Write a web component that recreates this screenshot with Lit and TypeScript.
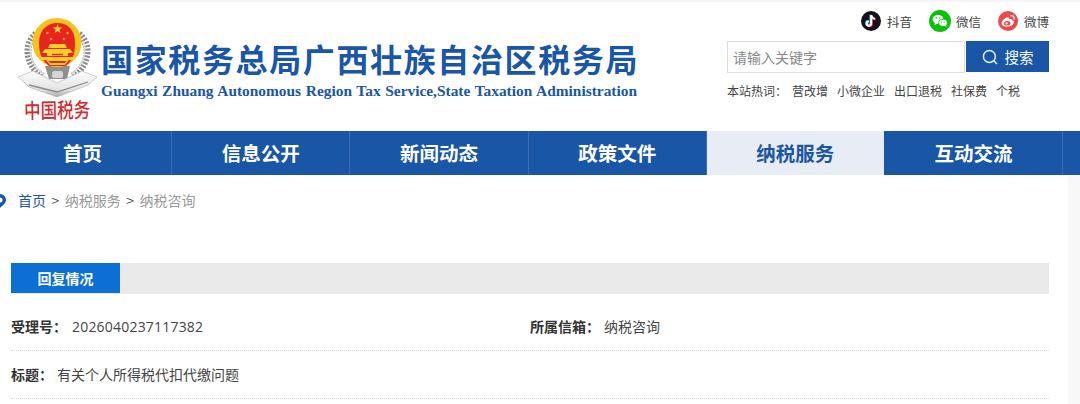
import { LitElement, html, css, svg } from "lit";
import { customElement } from "lit/decorators.js";

const star = (x: number, y: number, r: number) => {
  const pts: string[] = [];
  for (let i = 0; i < 10; i++) {
    const a = -Math.PI / 2 + (i * Math.PI) / 5;
    const q = i % 2 ? r * 0.4 : r;
    pts.push(`${(x + q * Math.cos(a)).toFixed(2)},${(y + q * Math.sin(a)).toFixed(2)}`);
  }
  return svg`<polygon points=${pts.join(" ")} fill="#ffd83a"/>`;
};

const logo = html`<svg class="logo" viewBox="0 0 101 129" width="101" height="129" aria-hidden="true">
  <defs>
    <linearGradient id="rb" x1="0" y1="0" x2="0" y2="1">
      <stop offset="0" stop-color="#fdfdfd"/><stop offset=".7" stop-color="#e4e4e4"/><stop offset="1" stop-color="#a9a9a9"/>
    </linearGradient>
  </defs>
  <g fill="none">
    <path d="M36 34 C24 44 25 64 42 76" stroke="#8d8d8d" stroke-width="7" stroke-dasharray="2 1.4"/>
    <path d="M79 34 C91 44 90 64 73 76" stroke="#8d8d8d" stroke-width="7" stroke-dasharray="2 1.4"/>
    <path d="M32 41 C28 51 31 65 43 74" stroke="#dedede" stroke-width="1.6"/>
    <path d="M83 41 C87 51 84 65 72 74" stroke="#dedede" stroke-width="1.6"/>
  </g>
  <path d="M45 66 H70 L67 79 H49 Z" fill="#8f8f8f"/>
  <path d="M18 77 L33 71 L57 83 L82 71 L97 77 L88 85 L57 97 L29 87 L24 82 Z" fill="url(#rb)" stroke="#b4b4b4" stroke-width=".7"/>
  <path d="M29 85 L57 92 L88 82" fill="none" stroke="#8a8a8a" stroke-width="1.3"/>
  <rect x="52" y="71" width="11" height="7" rx="2" fill="#d5d5d5"/>
  <circle cx="57" cy="42.500" r="24.500" fill="#f6c21c"/>
  <path d="M39 43 C39 30 47 23 57.500 23 C68 23 75 30 75 43 C75 55 72 61 66 66 H49 C43 61 39 55 39 43 Z" fill="#e8241f"/>
  ${star(57.5, 29, 5)}${star(47.5, 33, 1.8)}${star(67.5, 33, 1.8)}${star(51, 39, 1.7)}${star(64, 39, 1.7)}
  <path d="M50 44 H65 L67 48 H48 Z" fill="#f8cf2a"/>
  <path d="M45 49 H70 L73 53 H42 Z" fill="#f8cf2a"/>
  <rect x="47" y="53" width="21" height="3" fill="#f8cf2a"/>
  <rect x="52" y="53.800" width="11" height="1.500" fill="#e8241f"/>
  <path d="M40 57 H75 L73 60 H69 L65 65 H50 L46 60 H42 Z" fill="#f8cf2a"/>
  <path d="M48 61 H67 L64.500 63 H50.500 Z" fill="#e8241f"/>
  <text x="24" y="118" class="seal" textLength="66" lengthAdjust="spacingAndGlyphs" transform="rotate(-1 57 110)">中国税务</text>
</svg>`;

const douyin = html`<svg width="20" height="20" viewBox="0 0 20 20" aria-hidden="true">
  <circle cx="10" cy="10" r="10" fill="#15101a"/>
  <path d="M10.2 4.2 V12.6 A2.2 2.2 0 1 1 8 10.4 M10.2 4.2 C10.5 6.4 12 7.7 14 7.9" transform="translate(-.7 -.4)" fill="none" stroke="#25f4ee" stroke-width="1.9"/>
  <path d="M10.2 4.2 V12.6 A2.2 2.2 0 1 1 8 10.4 M10.2 4.2 C10.5 6.4 12 7.7 14 7.9" transform="translate(.7 .4)" fill="none" stroke="#fe2c55" stroke-width="1.9"/>
  <path d="M10.2 4.2 V12.6 A2.2 2.2 0 1 1 8 10.4 M10.2 4.2 C10.5 6.4 12 7.7 14 7.9" fill="none" stroke="#fff" stroke-width="1.9"/>
</svg>`;

const wechat = html`<svg width="22" height="22" viewBox="0 0 22 22" aria-hidden="true">
  <circle cx="11" cy="11" r="11" fill="#0cc10c"/>
  <ellipse cx="9" cy="9.300" rx="5.300" ry="4.400" fill="#fff"/>
  <path d="M6 12 L5.600 15 L8.600 13.200 Z" fill="#fff"/>
  <ellipse cx="14" cy="12.800" rx="4.300" ry="3.500" fill="#fff" stroke="#0cc10c" stroke-width=".8"/>
  <path d="M15.500 15.600 L17.400 17 L17 14.800 Z" fill="#fff"/>
  <circle cx="7.300" cy="8" r=".8" fill="#0cc10c"/><circle cx="10.700" cy="8" r=".8" fill="#0cc10c"/>
  <circle cx="12.600" cy="12" r=".6" fill="#0cc10c"/><circle cx="15.400" cy="12" r=".6" fill="#0cc10c"/>
</svg>`;

const weibo = html`<svg width="20" height="20" viewBox="0 0 20 20" aria-hidden="true">
  <circle cx="10" cy="10" r="10" fill="#ea4a4c"/>
  <path d="M3.600 12.400 C3.600 9.800 7 6.600 9.600 6.200 C11 6 11.200 7.200 10.900 8.300 C12.600 7.700 14.200 8 14.200 9.300 C15.600 9.800 16 10.700 15.800 11.800 C15.300 14 12.400 15.600 9.400 15.600 C6.400 15.600 3.600 14.600 3.600 12.400 Z" fill="#fff"/>
  <ellipse cx="9.200" cy="12.300" rx="3.200" ry="2.300" fill="#ea4a4c"/>
  <circle cx="8.600" cy="12.400" r="1.100" fill="#fff"/>
  <path d="M12.800 4.600 C15 4.300 16.700 6 16.200 8.200" fill="none" stroke="#fff" stroke-width="1.200" stroke-linecap="round"/>
</svg>`;

@customElement("app-root")
export class AppRoot extends LitElement {
  static styles = css`
    :host {
      display: block;
      width: 1080px;
      height: 404px;
      overflow: hidden;
      background: #fff;
      font-family: "Noto Sans CJK SC", "Noto Sans", sans-serif;
      color: #333;
    }
    * { box-sizing: border-box; }
    .header {
      height: 131px;
      border-top: 2px solid #f6f6f6;
      display: flex;
    }
    .logo { flex: none; margin-top: -2px; overflow: visible; }
    .logo .seal { font: 500 21px "Noto Sans CJK SC", serif; fill: #cf2d30; }
    .brand { padding-top: 36px; width: 536px; flex: none; color: #1a56a6; }
    .cn {
      font-size: 32px;
      font-weight: 700;
      line-height: 40px;
      letter-spacing: 1.63px;
      white-space: nowrap;
    }
    .en {
      font: 700 15.4px/18px "Liberation Serif", serif;
      margin-top: 4px;
      white-space: nowrap;
      text-align: justify;
      text-align-last: justify;
    }
    .tools { margin-left: 90px; width: 322px; flex: none; }
    .social {
      display: flex;
      justify-content: flex-end;
      align-items: center;
      height: 22px;
      margin-top: 8px;
      font-size: 12.5px;
      color: #444;
      gap: 17px;
    }
    .social span { display: flex; align-items: center; gap: 6px; white-space: nowrap; }
    .social span.tight { gap: 5px; }
    .search { display: flex; margin-top: 9px; gap: 1px; }
    .input {
      width: 238px;
      height: 32px;
      border: 1px solid #ddd;
      font-size: 14px;
      line-height: 30px;
      padding-left: 5px;
      color: #888;
    }
    .btn {
      width: 83px;
      height: 31px;
      background: #1a56a6;
      color: #fff;
      font-size: 14.5px;
      display: flex;
      align-items: center;
      justify-content: center;
      gap: 7px;
    }
    .hot {
      display: flex;
      font-size: 12px;
      line-height: 20px;
      margin-top: 8px;
      color: #444;
      gap: 9px;
      white-space: nowrap;
    }
    .hot .lead { margin-right: 1px; width: 55px; }
    .nav {
      height: 44px;
      background: #1a56a6;
      display: flex;
      overflow: hidden;
    }
    .nav div {
      flex: none;
      width: 178.2px;
      text-align: center;
      font-size: 19.5px;
      font-weight: 700;
      line-height: 44px;
      color: #fff;
      border-left: 1px solid #3a6db3;
    }
    .nav div:first-child { margin-left: -7px; }
    .nav div.on { background: #e8ecf5; color: #1a56a6; }
    .nav div.on + div { border-left-color: #1a56a6; }
    .body { display: flex; height: 229px; }
    .main { flex: 1; min-width: 0; padding-right: 19px; }
    .rail { width: 12px; flex: none; background: #f8f8f8; }
    .crumb {
      height: 52px;
      display: flex;
      align-items: flex-start;
      padding-top: 15px;
      font-size: 14px;
      line-height: 20px;
      color: #999;
      white-space: nowrap;
    }
    .pin { flex: none; margin-left: -7px; margin-top: 4px; margin-right: 11px; }
    .crumb a { color: #1a56a6; }
    .crumb i { font-style: normal; color: #555; margin: 0 5.5px; }
    .detail { margin: 36px 0 0 11px; }
    .tabbar { height: 31px; background: #eaeaea; display: flex; }
    .tab {
      width: 109px;
      height: 30px;
      background: #0b6fd3;
      color: #fff;
      font-size: 14px;
      font-weight: 700;
      line-height: 30px;
      text-align: center;
    }
    .row {
      height: 48px;
      display: flex;
      align-items: center;
      padding-bottom: 2px;
      font-size: 14px;
      color: #444;
      border-bottom: 1px dotted #ddd;
      white-space: nowrap;
    }
    .row.first { margin-top: 9px; }
    .cell { display: flex; width: 519px; flex: none; align-items: center; }
    .row b { color: #333; font-weight: 700; margin-right: 4px; }
    .row b.id { margin-right: 5px; }
    .num { letter-spacing: .2px; font-family: "Open Sans", sans-serif; margin-top: 1px; }
  `;

  render() {
    return html`
      <div class="header">
        ${logo}
        <div class="brand">
          <div class="cn">国家税务总局广西壮族自治区税务局</div>
          <div class="en">Guangxi Zhuang Autonomous Region Tax Service,State Taxation Administration</div>
        </div>
        <div class="tools">
          <div class="social">
            <span>${douyin}抖音</span>
            <span class="tight">${wechat}微信</span>
            <span>${weibo}微博</span>
          </div>
          <div class="search">
            <div class="input">请输入关键字</div>
            <div class="btn">
              <svg width="16" height="16" viewBox="0 0 16 16" aria-hidden="true"><circle cx="7.400" cy="7.400" r="6" fill="none" stroke="#e8eef8" stroke-width="1.500"/><path d="M11.800 11.800 L15 15" stroke="#e8eef8" stroke-width="1.500"/></svg>
              搜索
            </div>
          </div>
          <div class="hot">
            <span class="lead">本站热词：</span>
            <span>营改增</span><span>小微企业</span><span>出口退税</span><span>社保费</span><span>个税</span>
          </div>
        </div>
      </div>
      <div class="nav">
        <div>首页</div><div>信息公开</div><div>新闻动态</div><div>政策文件</div><div class="on">纳税服务</div><div>互动交流</div><div></div>
      </div>
      <div class="body">
        <div class="main">
          <div class="crumb">
            <svg class="pin" width="14" height="14" viewBox="0 0 14 14" aria-hidden="true"><path fill-rule="evenodd" d="M7 0 A6 6 0 0 1 13 6 C13 9 9.500 11.500 7 14 C4.500 11.500 1 9 1 6 A6 6 0 0 1 7 0 Z M7 3.500 A2.500 2.500 0 1 0 7 8.500 A2.500 2.500 0 1 0 7 3.500 Z" fill="#1a56a6"/></svg>
            <a>首页</a><i>&gt;</i>纳税服务<i>&gt;</i>纳税咨询
          </div>
          <div class="detail">
            <div class="tabbar"><div class="tab">回复情况</div></div>
            <div class="row first">
              <div class="cell"><b class="id">受理号：</b><span class="num">2026040237117382</span></div>
              <div class="cell"><b>所属信箱：</b><span>纳税咨询</span></div>
            </div>
            <div class="row"><b>标题：</b><span>有关个人所得税代扣代缴问题</span></div>
          </div>
        </div>
        <div class="rail"></div>
      </div>
    `;
  }
}
